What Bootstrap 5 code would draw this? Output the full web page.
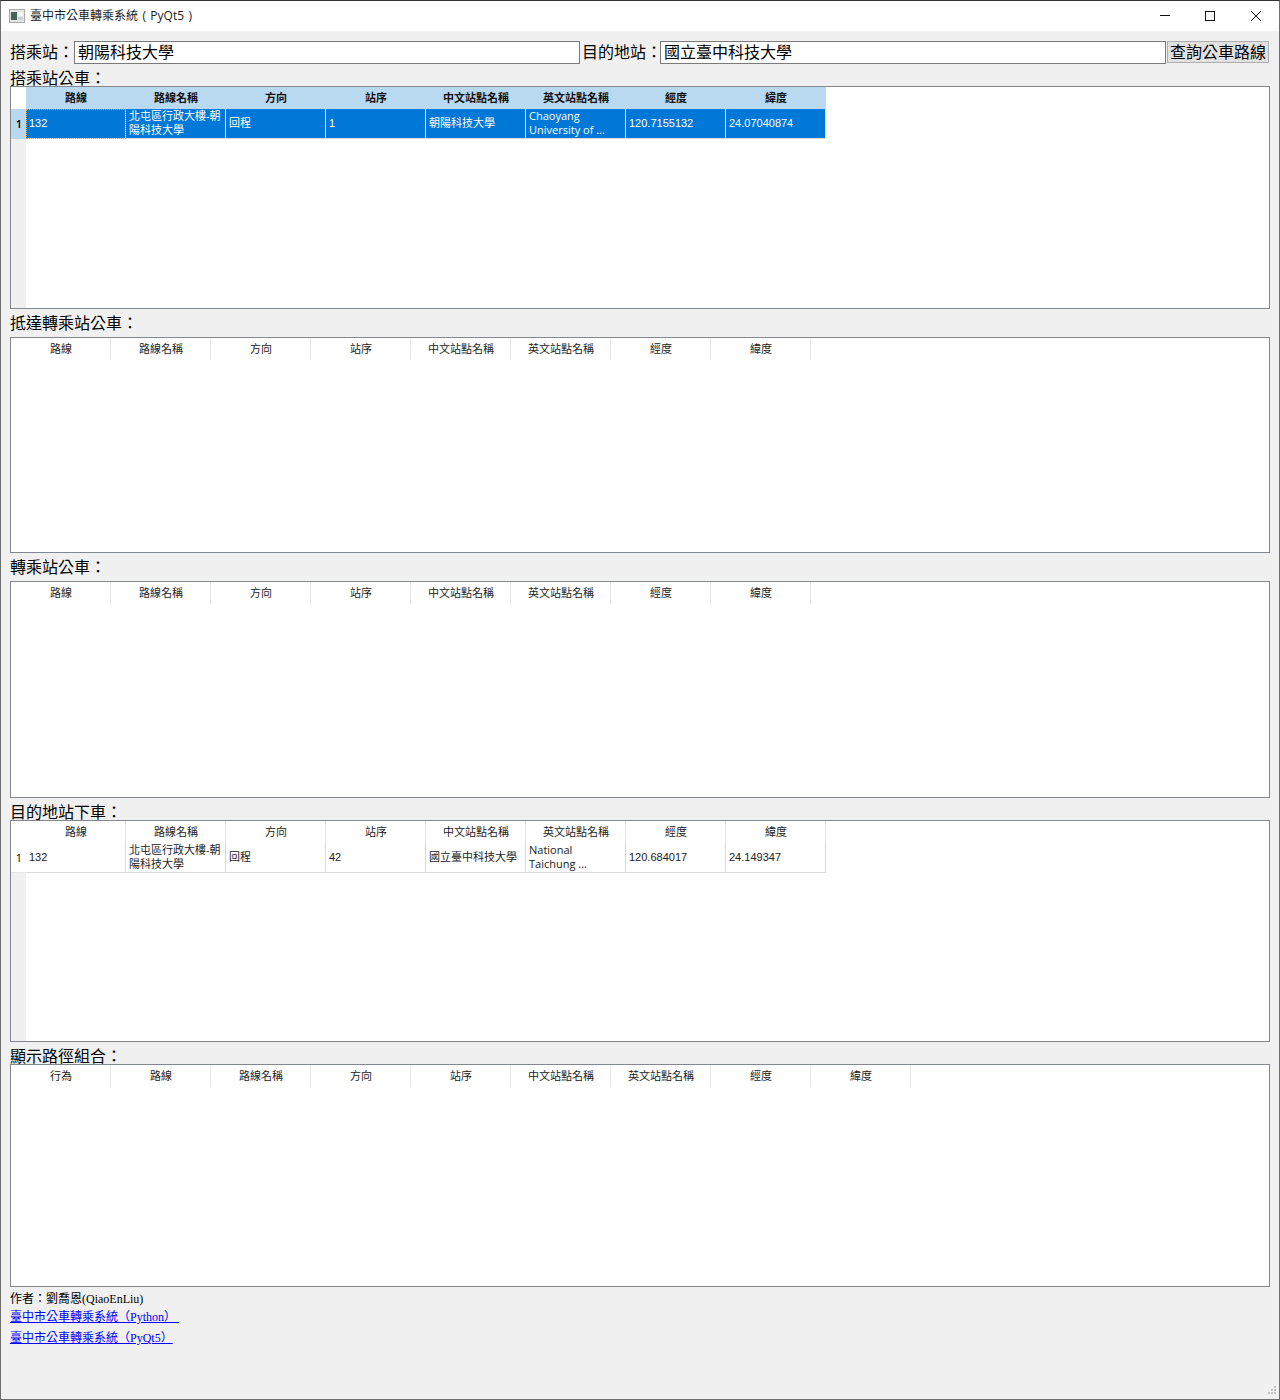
<!DOCTYPE html>
<html lang="zh-Hant">
<head>
  <meta charset="UTF-8" />
  <meta name="viewport" content="width=device-width, initial-scale=1" />
  <title>臺中市公車轉乘系統 ( PyQt5 )</title>
  <link href="https://cdn.jsdelivr.net/npm/bootstrap@5.3.0/dist/css/bootstrap.min.css" rel="stylesheet" />
  <style>
    html, body { margin: 0; background: #f0f0f0; }
    body { font-family: "Open Sans", "Noto Sans CJK TC", sans-serif; font-size: 11px; color: #000; }
    .app-window { position: relative; width: 1280px; height: 1400px; background: #f0f0f0; border: 1px solid #6e6e6e; border-top-color: #333; overflow: hidden; }
    .title-bar { height: 30px; background: #fff; font-size: 12px; color: #222; word-spacing: 1.3px; }
    .title-icon { margin-left: 8px; margin-right: 5px; }
    .win-btn { width: 46px; height: 30px; }
    .win-min { padding-left: 2px; }
    .win-body { padding: 10px 9px 0 9px; }
    .query-row { height: 22px; font-size: 16px; line-height: 22px; white-space: nowrap; }
    .query-label { flex: none; margin: 0; }
    .label-from { width: 64px; }
    .label-to { width: 78px; }
    .query-input { flex: none; box-sizing: border-box; width: 506px; height: 23px; padding: 0 3px 3px 3px; border: 1px solid #7a7a7a; border-radius: 0; background: #fff; font-size: 16px; line-height: 18px; color: #000; outline: 0; }
    .input-from { margin-right: 2px; }
    .input-to { margin-right: 1px; }
    .query-btn { flex: none; width: 102px; height: 22px; padding: 0; border: 1px solid #adadad; border-radius: 0; background: #e1e1e1; font-size: 16px; line-height: 19px; color: #000; }
    .sec-label { font-size: 16px; white-space: nowrap; }
    .sec-short { height: 23px; line-height: 16px; }
    .sec-low { height: 22px; line-height: 16px; }
    .sec-tall { height: 28px; line-height: 16px; }
    .grid-frame { width: 1260px; background: #fff; border: 1px solid #828790; overflow: hidden; }
    .h-223 { height: 223px; }
    .h-216 { height: 216px; }
    .h-217 { height: 217px; }
    .h-222 { height: 222px; }
    .row-gutter { width: 15px; flex: none; background: #f0f0f0; }
    .gutter-corner { height: 22px; background: #fff; }
    .gutter-num { height: 30px; background: #fff; border-bottom: 1px solid #e5e5e5; padding-right: 4px; text-align: right; line-height: 29px; }
    .gutter-num.is-sel { background: #b9d9f1; border-bottom-color: #b9d9f1; color: #000; font-weight: 600; }
    .qt-grid { width: auto; table-layout: fixed; border-collapse: separate; border-spacing: 0; margin: 0; }
    .qt-grid th, .qt-grid td { width: 100px; min-width: 100px; max-width: 100px; box-sizing: border-box; font-size: 11px; }
    .qt-grid thead th { height: 22px; padding: 0 0 0 1px; background: transparent; box-shadow: none; border: 0; border-right: 1px solid #e5e5e5; font-weight: normal; text-align: center; vertical-align: middle; line-height: 20px; color: #222; }
    .qt-grid tbody td { height: 30px; padding: 0 2px 1px 3px; background: transparent; box-shadow: none; border: 0; border-right: 1px solid #d9d9d9; border-bottom: 1px solid #d9d9d9; line-height: 14px; vertical-align: middle; white-space: nowrap; overflow: hidden; color: #222; }
    .qt-grid tbody td.num-cell { font-family: "Liberation Sans", "Noto Sans CJK TC", sans-serif; }
    .qt-grid.has-sel thead th { background: #b9d9f1; border-right-color: #b9d9f1; font-weight: bold; color: #111; }
    .qt-grid.has-sel tbody td { background: #0078d7; color: #fff; border-right-color: #d9e8f5; border-bottom-color: #d9d9d9; }
    .qt-grid.has-sel tbody td.cell-focus { outline: 1px dotted #e8a33d; outline-offset: -1px; }
    .foot-text { font-family: "Liberation Serif", "Noto Sans CJK TC", serif; font-size: 12px; line-height: 19px; padding-top: 3px; }
    .foot-text a { color: #00f; text-decoration: underline; }
    .foot-line-1 { height: 18px; line-height: 19px; }
    .foot-line-2 { height: 20px; line-height: 20px; margin-top: 1px; }
    .size-grip { position: absolute; right: 1px; bottom: 1px; }
  </style>
</head>
<body>
  <div class="app-window d-flex flex-column">
    <!-- Title bar -->
    <div class="title-bar d-flex align-items-center">
      <svg class="title-icon" width="16" height="14" viewBox="0 0 16 14">
        <rect x="0.5" y="0.5" width="15" height="13" fill="#e6e6e6" stroke="#a9a9a9" />
        <rect x="2" y="3" width="6" height="8" fill="#44635a" />
        <rect x="9" y="3" width="5" height="4" fill="#fafafa" />
        <rect x="9" y="8" width="5" height="3" fill="#c5d4d0" />
      </svg>
      <span class="flex-grow-1">臺中市公車轉乘系統 ( PyQt5 )</span>
      <div class="win-btn win-min d-flex align-items-center justify-content-center">
        <svg width="10" height="10" viewBox="0 0 10 10"><path d="M0 4.5h10" stroke="#111" fill="none" /></svg>
      </div>
      <div class="win-btn d-flex align-items-center justify-content-center">
        <svg width="10" height="10" viewBox="0 0 10 10"><rect x="0.5" y="0.5" width="9" height="9" stroke="#111" fill="none" /></svg>
      </div>
      <div class="win-btn d-flex align-items-center justify-content-center">
        <svg width="10" height="10" viewBox="0 0 10 10"><path d="M0 0l10 10M10 0L0 10" stroke="#111" fill="none" /></svg>
      </div>
    </div>

    <div class="win-body flex-grow-1">
      <!-- Query row -->
      <div class="query-row d-flex align-items-start">
        <label class="query-label label-from">搭乘站：</label>
        <input class="query-input input-from" type="text" value="朝陽科技大學" />
        <label class="query-label label-to">目的地站：</label>
        <input class="query-input input-to" type="text" value="國立臺中科技大學" />
        <button class="query-btn btn" type="button">查詢公車路線</button>
      </div>

      <!-- 搭乘站公車 -->
      <div class="sec-label sec-short d-flex align-items-end">搭乘站公車：</div>
      <div class="grid-frame h-223 d-flex">
        <div class="row-gutter">
          <div class="gutter-corner"></div>
          <div class="gutter-num is-sel">1</div>
        </div>
        <div>
          <table class="table qt-grid has-sel">
            <thead><tr><th>路線</th><th>路線名稱</th><th>方向</th><th>站序</th><th>中文站點名稱</th><th>英文站點名稱</th><th>經度</th><th>緯度</th></tr></thead>
            <tbody><tr><td class="cell-focus num-cell">132</td><td>北屯區行政大樓-朝<br />陽科技大學</td><td>回程</td><td class="num-cell">1</td><td>朝陽科技大學</td><td>Chaoyang<br />University of ...</td><td class="num-cell">120.7155132</td><td class="num-cell">24.07040874</td></tr></tbody>
          </table>
        </div>
      </div>

      <!-- 抵達轉乘站公車 -->
      <div class="sec-label sec-tall d-flex align-items-center">抵達轉乘站公車：</div>
      <div class="grid-frame h-216">
        <table class="table qt-grid">
          <thead><tr><th>路線</th><th>路線名稱</th><th>方向</th><th>站序</th><th>中文站點名稱</th><th>英文站點名稱</th><th>經度</th><th>緯度</th></tr></thead>
        </table>
      </div>

      <!-- 轉乘站公車 -->
      <div class="sec-label sec-tall d-flex align-items-center">轉乘站公車：</div>
      <div class="grid-frame h-217">
        <table class="table qt-grid">
          <thead><tr><th>路線</th><th>路線名稱</th><th>方向</th><th>站序</th><th>中文站點名稱</th><th>英文站點名稱</th><th>經度</th><th>緯度</th></tr></thead>
        </table>
      </div>

      <!-- 目的地站下車 -->
      <div class="sec-label sec-low d-flex align-items-end">目的地站下車：</div>
      <div class="grid-frame h-222 d-flex">
        <div class="row-gutter">
          <div class="gutter-corner"></div>
          <div class="gutter-num">1</div>
        </div>
        <div>
          <table class="table qt-grid">
            <thead><tr><th>路線</th><th>路線名稱</th><th>方向</th><th>站序</th><th>中文站點名稱</th><th>英文站點名稱</th><th>經度</th><th>緯度</th></tr></thead>
            <tbody><tr><td class="num-cell">132</td><td>北屯區行政大樓-朝<br />陽科技大學</td><td>回程</td><td class="num-cell">42</td><td>國立臺中科技大學</td><td>National<br />Taichung ...</td><td class="num-cell">120.684017</td><td class="num-cell">24.149347</td></tr></tbody>
          </table>
        </div>
      </div>

      <!-- 顯示路徑組合 -->
      <div class="sec-label sec-low d-flex align-items-end">顯示路徑組合：</div>
      <div class="grid-frame h-223">
        <table class="table qt-grid">
          <thead><tr><th>行為</th><th>路線</th><th>路線名稱</th><th>方向</th><th>站序</th><th>中文站點名稱</th><th>英文站點名稱</th><th>經度</th><th>緯度</th></tr></thead>
        </table>
      </div>

      <!-- Footer -->
      <div class="foot-text">
        <div class="foot-line-1">作者：劉喬恩(QiaoEnLiu)</div>
        <div><a href="#">臺中市公車轉乘系統（Python）&nbsp;</a></div>
        <div class="foot-line-2"><a href="#">臺中市公車轉乘系統（PyQt5）</a></div>
      </div>
    </div>

    <svg class="size-grip" width="12" height="12" viewBox="0 0 12 12" fill="#c4c4c4">
      <rect x="8" y="0" width="2" height="2" />
      <rect x="5" y="3" width="2" height="2" /><rect x="8" y="3" width="2" height="2" />
      <rect x="2" y="6" width="2" height="2" /><rect x="5" y="6" width="2" height="2" /><rect x="8" y="6" width="2" height="2" />
    </svg>
  </div>
  <script src="https://cdn.jsdelivr.net/npm/bootstrap@5.3.0/dist/js/bootstrap.bundle.min.js"></script>
</body>
</html>
